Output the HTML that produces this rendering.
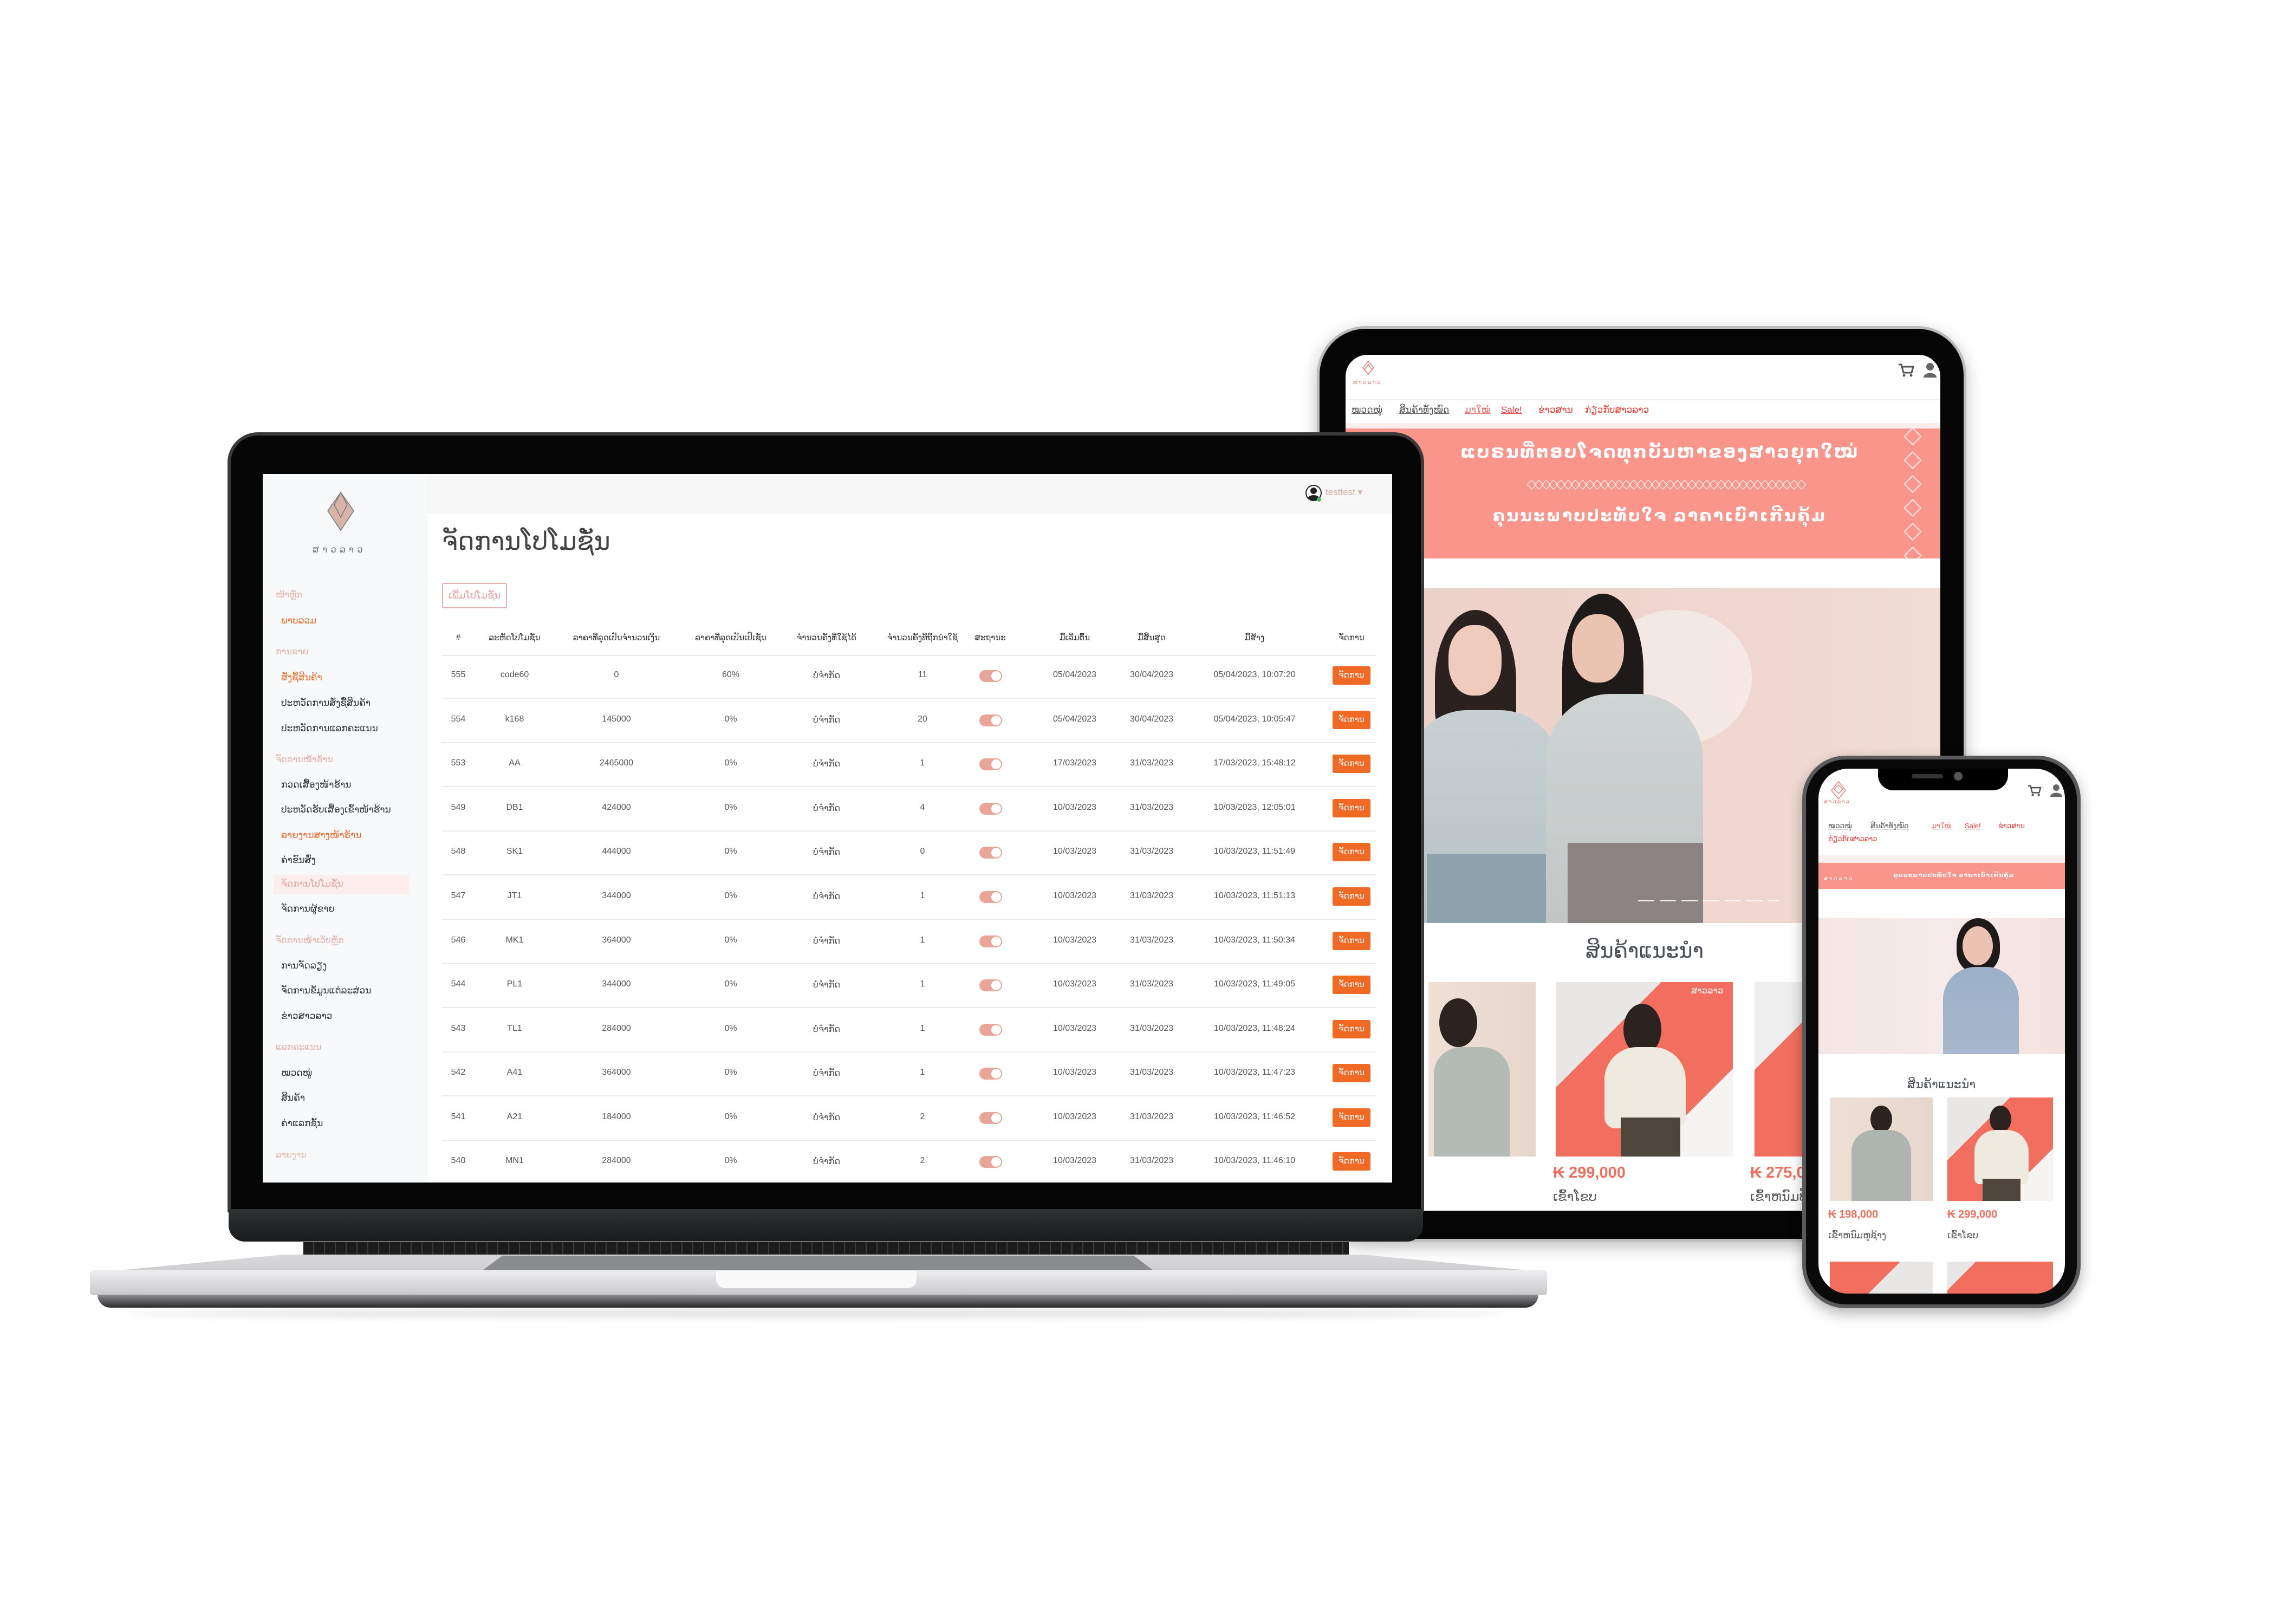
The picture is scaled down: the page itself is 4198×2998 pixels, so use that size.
<!DOCTYPE html>
<html><head><meta charset="utf-8">
<style>
*{margin:0;padding:0;box-sizing:border-box}
body{width:4198px;height:2998px;background:#fff;position:relative;overflow:hidden;font-family:"Liberation Sans","DejaVu Sans",sans-serif}
.a{position:absolute;white-space:nowrap}
.lao{font-family:"Liberation Sans","DejaVu Sans",sans-serif}
.row{position:absolute;left:0;width:2085px;height:40px;font-size:16px;color:#555;white-space:nowrap}
.row span{position:absolute;width:220px;margin-left:-110px;text-align:center;top:10px}
.hd{font-size:15px;color:#333}
.c1{left:361px}.c2{left:465px}.c3{left:653px}.c4{left:864px}.c5{left:1041px}.c6{left:1218px}.c7{left:1343px}.c8{left:1499px}.c9{left:1641px}.c10{left:1831px}.c11{left:2010px}
.tg{position:absolute;left:1323px;top:10px;width:42px;height:22px;border-radius:11px;background:#e9a597}
.tg:after{content:"";position:absolute;right:2px;top:2px;width:18px;height:18px;border-radius:50%;background:#fff}
.bt{position:absolute;left:1975px;top:3px;width:70px;height:34px;background:#f06a25;color:#fff;font-size:15px;font-weight:normal;text-align:center;line-height:34px;border-radius:3px}
.sep{position:absolute;left:331px;width:1724px;height:2px;background:#e9eaec}
.sb{position:absolute;left:34px;font-size:17px;color:#333;white-space:nowrap}
.sl{position:absolute;left:24px;font-size:16px;color:#e6b1a8;white-space:nowrap}
.nav span{position:absolute;text-decoration:underline;color:#555;white-space:nowrap}
</style></head><body>

<!-- ================= TABLET ================= -->
<div class="a" style="left:2431px;top:602px;width:1199px;height:1690px;border-radius:90px;background:#050505;border:5px solid #bcbcbc;box-shadow:0 10px 30px rgba(0,0,0,.25)"></div>
<div class="a" style="left:2484px;top:655px;width:1098px;height:1580px;background:#fff;border-radius:40px 40px 0 0;overflow:hidden">
  <svg class="a" style="left:22px;top:10px" width="40" height="36" viewBox="0 0 40 36"><path d="M20 2 L30 14 L20 26 L10 14Z M20 8 L27 17 L20 26 L13 17Z" fill="none" stroke="#ee7f77" stroke-width="1.5"/></svg>
  <div class="a" style="left:14px;top:44px;font-size:11px;color:#ee7f77;letter-spacing:2px">ສາວລາວ</div>
  <svg class="a" style="left:1020px;top:16px" width="30" height="26" viewBox="0 0 30 26"><path d="M1 2 H6 L10 17 H25 L28 6 H8" fill="none" stroke="#555" stroke-width="3"/><circle cx="11" cy="22" r="2.5" fill="#555"/><circle cx="24" cy="22" r="2.5" fill="#555"/></svg>
  <svg class="a" style="left:1066px;top:14px" width="26" height="28" viewBox="0 0 26 28"><circle cx="13" cy="8" r="7" fill="#666"/><path d="M1 28 C1 17 25 17 25 28Z" fill="#666"/></svg>
  <div class="a" style="left:0;top:82px;width:1098px;height:2px;background:#f1f1f1"></div>
  <div class="nav" style="position:absolute;left:0;top:92px;font-size:17px">
    <span style="left:11px">ໝວດໝູ່</span><span style="left:99px">ສິນຄ້າທັງໝົດ</span><span style="left:220px;color:#ee6f66">ມາໃໝ່</span><span style="left:287px;color:#ee3a33">Sale!</span><span style="left:356px;color:#ee3a33;text-decoration:none">ຂ່າວສານ</span><span style="left:442px;color:#ee3a33;text-decoration:none">ກ່ຽວກັບສາວລາວ</span>
  </div>
  <div class="a" style="left:0;top:126px;width:1098px;height:250px;background:#f9958a;overflow:hidden">
    <div class="a" style="left:0;top:0;width:1098px;height:10px;background:#fdeeee"></div>
    <div class="a" style="left:140px;top:34px;width:880px;text-align:center;color:#fff;font-size:32px;letter-spacing:3px;font-weight:bold">ແບຣນທີ່ຕອບໂຈດທຸກບັນຫາຂອງສາວຍຸກໃໝ່</div>
    <div class="a" style="left:290px;top:98px;width:600px;text-align:center;color:#fff;font-size:24px;letter-spacing:-5px;opacity:.85">◇◇◇◇◇◇◇◇◇◇◇◇◇◇◇◇◇◇◇◇◇◇◇◇◇◇◇◇◇◇◇◇◇◇◇◇◇◇</div>
    <div class="a" style="left:160px;top:154px;width:840px;text-align:center;color:#fff;font-size:30px;letter-spacing:3px;font-weight:bold">ຄຸນນະພາບປະທັບໃຈ ລາຄາເບົາເກີນຄຸ້ມ</div>
    <div class="a" style="left:1030px;top:0;width:60px;height:250px;color:#fff;font-size:44px;line-height:44px;opacity:.7;white-space:normal">◇<br>◇<br>◇<br>◇<br>◇<br>◇</div>
  </div>
  <!-- hero -->
  <div class="a" style="left:0;top:431px;width:1098px;height:618px;background:linear-gradient(90deg,#ecd0c7,#efd4cc 45%,#f1dcd6);overflow:hidden">
    <div class="a" style="left:470px;top:40px;width:280px;height:250px;border-radius:50%;background:#f7f0ee;opacity:.7"></div>
    <div class="a" style="left:840px;top:330px;width:200px;height:200px;border-radius:50%;background:#f6f1f0;opacity:.7"></div>
    <!-- left woman -->
    <div class="a" style="left:165px;top:40px;width:150px;height:260px;border-radius:50% 50% 30% 30%;background:#2b221f"></div>
    <div class="a" style="left:190px;top:68px;width:98px;height:130px;border-radius:45%;background:#f0cbbd"></div>
    <div class="a" style="left:115px;top:225px;width:280px;height:400px;border-radius:110px 110px 0 0;background:linear-gradient(#c7d0d2,#b7c2c4)"></div>
    <div class="a" style="left:150px;top:490px;width:230px;height:130px;background:#8ea3ac"></div>
    <!-- right woman -->
    <div class="a" style="left:400px;top:10px;width:150px;height:280px;border-radius:50% 50% 20% 20%;background:#1f1a1a"></div>
    <div class="a" style="left:418px;top:48px;width:96px;height:126px;border-radius:45%;background:#ebc3b3"></div>
    <div class="a" style="left:370px;top:195px;width:290px;height:425px;border-radius:120px 120px 0 0;background:linear-gradient(#cfd4d4,#c2c7c6)"></div>
    <div class="a" style="left:410px;top:470px;width:250px;height:150px;background:#8a8382"></div>
    <div class="a" style="left:540px;top:575px;width:260px;height:3px;background:repeating-linear-gradient(90deg,#fff 0 30px,transparent 30px 40px);opacity:.8"></div>
  </div>
  <div class="a" style="left:352px;top:1078px;width:400px;text-align:center;font-size:38px;color:#4a4f57">ສິນຄ້າແນະນຳ</div>
  <div class="a" style="left:153px;top:1158px;width:198px;height:322px;background:linear-gradient(90deg,#efe0d6,#e8d6cc)">
    <div class="a" style="left:20px;top:30px;width:70px;height:90px;border-radius:50%;background:#2c2320"></div>
    <div class="a" style="left:10px;top:120px;width:140px;height:202px;border-radius:50px 50px 0 0;background:#b4bab5"></div>
  </div>
  <div class="a" style="left:388px;top:1158px;width:327px;height:322px;background:linear-gradient(135deg,#e9e6e6 30%,#f26f5f 30%,#f26f5f 75%,#f6f3f3 75%)">
    <div class="a" style="left:125px;top:40px;width:70px;height:95px;border-radius:50%;background:#2c2320"></div>
    <div class="a" style="left:90px;top:120px;width:150px;height:150px;border-radius:60px 60px 20px 20px;background:#eeeae0"></div>
    <div class="a" style="left:120px;top:250px;width:110px;height:72px;background:#4e453c"></div>
    <div class="a" style="left:250px;top:6px;color:#fff;font-size:16px">ສາວລາວ</div>
  </div>
  <div class="a" style="left:755px;top:1158px;width:327px;height:322px;background:linear-gradient(135deg,#eee 25%,#f26f5f 25%)"></div>
  <div class="a" style="left:383px;top:1494px;font-size:29px;color:#f0705f;font-weight:bold">₭ 299,000</div>
  <div class="a" style="left:747px;top:1494px;font-size:29px;color:#f0705f;font-weight:bold">₭ 275,000</div>
  <div class="a" style="left:383px;top:1540px;font-size:24px;color:#555">ເຂົ້າໂຂບ</div>
  <div class="a" style="left:747px;top:1540px;font-size:24px;color:#555">ເຂົ້າຫນົມປັງ</div>
</div>

<!-- ================= LAPTOP ================= -->
<div class="a" style="left:420px;top:798px;width:2209px;height:1440px;border-radius:56px 56px 0 0;background:#060606;border:6px solid #3a3a3a;border-bottom:none"></div>
<div class="a" style="left:422px;top:2232px;width:2205px;height:60px;background:linear-gradient(#2f3032,#1a1b1d);border-radius:0 0 30px 30px"></div>
<div class="a" style="left:560px;top:2293px;width:1930px;height:25px;background:repeating-linear-gradient(90deg,#1c1c1c 0 18px,#3a3a3a 18px 20px)"></div>
<div class="a" style="left:210px;top:2316px;width:2620px;height:30px;background:linear-gradient(#d9d9db,#cfcfd1);clip-path:polygon(12% 0,88% 0,100% 100%,0 100%)"></div>
<div class="a" style="left:890px;top:2318px;width:1240px;height:28px;background:#8a8b8e;clip-path:polygon(3% 0,97% 0,100% 100%,0 100%)"></div>
<div class="a" style="left:166px;top:2345px;width:2690px;height:46px;background:linear-gradient(#eeeef0,#c9c9cc);border-radius:6px"></div>
<div class="a" style="left:1322px;top:2346px;width:370px;height:32px;background:#fafafa;border-radius:0 0 16px 16px"></div>
<div class="a" style="left:180px;top:2390px;width:2660px;height:24px;background:linear-gradient(#8f8f92,#2a2a2c);border-radius:0 0 40px 40px"></div>
<div class="a" style="left:240px;top:2418px;width:2540px;height:14px;background:rgba(0,0,0,.12);filter:blur(6px);border-radius:50%"></div>

<div class="a lao" style="left:485px;top:875px;width:2085px;height:1308px;background:#fff;overflow:hidden">
  <div class="a" style="left:0;top:0;width:2085px;height:73px;background:#f7f7f7"></div>
  <div class="a" style="left:0;top:0;width:304px;height:1308px;background:#f8f9fa"></div>
  <svg class="a" style="left:106px;top:32px" width="76" height="92" viewBox="0 0 76 92"><path d="M38 2 L62 36 L38 72 L14 36Z" fill="#d8b3aa" stroke="#777" stroke-width="1.5"/><path d="M38 2 L50 25 L38 48 L26 25Z" fill="none" stroke="#777" stroke-width="1.5"/></svg>
  <div class="a" style="left:92px;top:130px;font-size:17px;color:#777;letter-spacing:6px">ສາວລາວ</div>

  <div class="sl" style="top:213px">ໜ້າຫຼັກ</div>
  <div class="sb" style="top:261px;color:#ef6a2a">ພາບລວມ</div>
  <div class="sl" style="top:318px">ການຂາຍ</div>
  <div class="sb" style="top:366px;color:#ef6a2a">ສັ່ງຊື້ສິນຄ້າ</div>
  <div class="sb" style="top:413px">ປະຫວັດການສັ່ງຊື້ສິນຄ້າ</div>
  <div class="sb" style="top:460px">ປະຫວັດການແລກຄະແນນ</div>
  <div class="sl" style="top:517px">ຈັດການໜ້າຮ້ານ</div>
  <div class="sb" style="top:564px">ກວດເສື້ອງໜ້າຮ້ານ</div>
  <div class="sb" style="top:610px">ປະຫວັດຮັບເສື້ອງເຂົ້າໜ້າຮ້ານ</div>
  <div class="sb" style="top:657px;color:#ef6a2a">ລາຍງານສາງໜ້າຮ້ານ</div>
  <div class="sb" style="top:703px">ຄ່າຂົນສົ່ງ</div>
  <div class="a" style="left:20px;top:740px;width:250px;height:36px;background:#fbeeec"></div>
  <div class="sb" style="top:747px;color:#e6a99f">ຈັດການໂປໂມຊັ່ນ</div>
  <div class="sb" style="top:793px">ຈັດການຜູ້ຂາຍ</div>
  <div class="sl" style="top:851px">ຈັດການໜ້າເວັບຫຼັກ</div>
  <div class="sb" style="top:898px">ການຈັດລຽງ</div>
  <div class="sb" style="top:944px">ຈັດການຂໍ້ມູນແຕ່ລະສ່ວນ</div>
  <div class="sb" style="top:991px">ຂ່າວສາວລາວ</div>
  <div class="sl" style="top:1048px">ແລກຄະແນນ</div>
  <div class="sb" style="top:1096px">ໝວດໝູ່</div>
  <div class="sb" style="top:1142px">ສິນຄ້າ</div>
  <div class="sb" style="top:1189px">ຄ່າແລກຊັ້ນ</div>
  <div class="sl" style="top:1247px">ລາຍງານ</div>

  <svg class="a" style="left:1925px;top:20px" width="30" height="32" viewBox="0 0 30 32"><circle cx="15" cy="15" r="14" fill="#fff" stroke="#222" stroke-width="2"/><circle cx="15" cy="11" r="6" fill="#222"/><path d="M4 25 C6 17 24 17 26 25 C22 30 8 30 4 25Z" fill="#222"/><circle cx="25" cy="27" r="4" fill="#3cc060"/></svg>
  <div class="a" style="left:1962px;top:24px;font-size:17px;color:#d8aaa2">testtest ▾</div>

  <div class="a" style="left:331px;top:97px;font-size:46px;color:#444">ຈັດການໂປໂມຊັ່ນ</div>
  <div class="a" style="left:331px;top:201px;width:120px;height:47px;border:2px solid #e8b0aa;border-radius:3px;color:#e5a69d;font-size:18px;text-align:center;line-height:43px">ເພີ່ມໂປໂມຊັ່ນ</div>

  <div class="row hd" style="top:283px"><span class="c1">#</span><span class="c2">ລະຫັດໂປໂມຊັ່ນ</span><span class="c3">ລາຄາທີ່ລຸດເປັນຈຳນວນເງິນ</span><span class="c4">ລາຄາທີ່ລຸດເປັນເປີເຊັນ</span><span class="c5">ຈຳນວນຄັ້ງທີ່ໃຊ້ໄດ້</span><span class="c6">ຈຳນວນຄັ້ງທີ່ຖືກນຳໃຊ້</span><span class="c7">ສະຖານະ</span><span class="c8">ມື້ເລີ່ມຕົ້ນ</span><span class="c9">ມື້ສິ້ນສຸດ</span><span class="c10">ມື້ສ້າງ</span><span class="c11">ຈັດການ</span></div>
  <div class="sep" style="top:334px"></div>

  <div class="row" style="top:352px"><span class="c1">555</span><span class="c2">code60</span><span class="c3">0</span><span class="c4">60%</span><span class="c5">ບໍ່ຈຳກັດ</span><span class="c6">11</span><i class="tg"></i><span class="c8">05/04/2023</span><span class="c9">30/04/2023</span><span class="c10">05/04/2023, 10:07:20</span><b class="bt">ຈັດການ</b></div>
  <div class="sep" style="top:413px"></div>
  <div class="row" style="top:434px"><span class="c1">554</span><span class="c2">k168</span><span class="c3">145000</span><span class="c4">0%</span><span class="c5">ບໍ່ຈຳກັດ</span><span class="c6">20</span><i class="tg"></i><span class="c8">05/04/2023</span><span class="c9">30/04/2023</span><span class="c10">05/04/2023, 10:05:47</span><b class="bt">ຈັດການ</b></div>
  <div class="sep" style="top:495px"></div>
  <div class="row" style="top:515px"><span class="c1">553</span><span class="c2">AA</span><span class="c3">2465000</span><span class="c4">0%</span><span class="c5">ບໍ່ຈຳກັດ</span><span class="c6">1</span><i class="tg"></i><span class="c8">17/03/2023</span><span class="c9">31/03/2023</span><span class="c10">17/03/2023, 15:48:12</span><b class="bt">ຈັດການ</b></div>
  <div class="sep" style="top:576px"></div>
  <div class="row" style="top:597px"><span class="c1">549</span><span class="c2">DB1</span><span class="c3">424000</span><span class="c4">0%</span><span class="c5">ບໍ່ຈຳກັດ</span><span class="c6">4</span><i class="tg"></i><span class="c8">10/03/2023</span><span class="c9">31/03/2023</span><span class="c10">10/03/2023, 12:05:01</span><b class="bt">ຈັດການ</b></div>
  <div class="sep" style="top:658px"></div>
  <div class="row" style="top:678px"><span class="c1">548</span><span class="c2">SK1</span><span class="c3">444000</span><span class="c4">0%</span><span class="c5">ບໍ່ຈຳກັດ</span><span class="c6">0</span><i class="tg"></i><span class="c8">10/03/2023</span><span class="c9">31/03/2023</span><span class="c10">10/03/2023, 11:51:49</span><b class="bt">ຈັດການ</b></div>
  <div class="sep" style="top:739px"></div>
  <div class="row" style="top:760px"><span class="c1">547</span><span class="c2">JT1</span><span class="c3">344000</span><span class="c4">0%</span><span class="c5">ບໍ່ຈຳກັດ</span><span class="c6">1</span><i class="tg"></i><span class="c8">10/03/2023</span><span class="c9">31/03/2023</span><span class="c10">10/03/2023, 11:51:13</span><b class="bt">ຈັດການ</b></div>
  <div class="sep" style="top:821px"></div>
  <div class="row" style="top:842px"><span class="c1">546</span><span class="c2">MK1</span><span class="c3">364000</span><span class="c4">0%</span><span class="c5">ບໍ່ຈຳກັດ</span><span class="c6">1</span><i class="tg"></i><span class="c8">10/03/2023</span><span class="c9">31/03/2023</span><span class="c10">10/03/2023, 11:50:34</span><b class="bt">ຈັດການ</b></div>
  <div class="sep" style="top:903px"></div>
  <div class="row" style="top:923px"><span class="c1">544</span><span class="c2">PL1</span><span class="c3">344000</span><span class="c4">0%</span><span class="c5">ບໍ່ຈຳກັດ</span><span class="c6">1</span><i class="tg"></i><span class="c8">10/03/2023</span><span class="c9">31/03/2023</span><span class="c10">10/03/2023, 11:49:05</span><b class="bt">ຈັດການ</b></div>
  <div class="sep" style="top:984px"></div>
  <div class="row" style="top:1005px"><span class="c1">543</span><span class="c2">TL1</span><span class="c3">284000</span><span class="c4">0%</span><span class="c5">ບໍ່ຈຳກັດ</span><span class="c6">1</span><i class="tg"></i><span class="c8">10/03/2023</span><span class="c9">31/03/2023</span><span class="c10">10/03/2023, 11:48:24</span><b class="bt">ຈັດການ</b></div>
  <div class="sep" style="top:1066px"></div>
  <div class="row" style="top:1086px"><span class="c1">542</span><span class="c2">A41</span><span class="c3">364000</span><span class="c4">0%</span><span class="c5">ບໍ່ຈຳກັດ</span><span class="c6">1</span><i class="tg"></i><span class="c8">10/03/2023</span><span class="c9">31/03/2023</span><span class="c10">10/03/2023, 11:47:23</span><b class="bt">ຈັດການ</b></div>
  <div class="sep" style="top:1147px"></div>
  <div class="row" style="top:1168px"><span class="c1">541</span><span class="c2">A21</span><span class="c3">184000</span><span class="c4">0%</span><span class="c5">ບໍ່ຈຳກັດ</span><span class="c6">2</span><i class="tg"></i><span class="c8">10/03/2023</span><span class="c9">31/03/2023</span><span class="c10">10/03/2023, 11:46:52</span><b class="bt">ຈັດການ</b></div>
  <div class="sep" style="top:1229px"></div>
  <div class="row" style="top:1249px"><span class="c1">540</span><span class="c2">MN1</span><span class="c3">284000</span><span class="c4">0%</span><span class="c5">ບໍ່ຈຳກັດ</span><span class="c6">2</span><i class="tg"></i><span class="c8">10/03/2023</span><span class="c9">31/03/2023</span><span class="c10">10/03/2023, 11:46:10</span><b class="bt">ຈັດການ</b></div>
</div>

<!-- ================= PHONE ================= -->
<div class="a" style="left:3327px;top:1395px;width:514px;height:1020px;border-radius:80px;background:#0a0a0a;border:7px solid #5a5a5c;box-shadow:0 10px 25px rgba(0,0,0,.3)"></div>
<div class="a" style="left:3357px;top:1419px;width:455px;height:969px;border-radius:55px;background:#fff;overflow:hidden">
  <div class="a" style="left:110px;top:0;width:240px;height:40px;background:#000;border-radius:0 0 28px 28px"></div>
  <div class="a" style="left:172px;top:10px;width:58px;height:8px;border-radius:4px;background:#333"></div>
  <div class="a" style="left:250px;top:6px;width:16px;height:16px;border-radius:50%;background:#555"></div>
  <svg class="a" style="left:20px;top:22px" width="34" height="40" viewBox="0 0 34 40"><path d="M17 2 L30 18 L17 34 L4 18Z M17 8 L25 16 L17 24 L9 16Z" fill="none" stroke="#ee7f77" stroke-width="1.5"/></svg>
  <div class="a" style="left:10px;top:56px;font-size:10px;color:#ee7f77;letter-spacing:2px">ສາວລາວ</div>
  <svg class="a" style="left:386px;top:30px" width="26" height="22" viewBox="0 0 30 26"><path d="M1 2 H6 L10 17 H25 L28 6 H8" fill="none" stroke="#555" stroke-width="3"/><circle cx="11" cy="22" r="2.5" fill="#555"/><circle cx="24" cy="22" r="2.5" fill="#555"/></svg>
  <svg class="a" style="left:428px;top:28px" width="22" height="24" viewBox="0 0 22 24"><circle cx="11" cy="7" r="6" fill="#666"/><path d="M0 24 C0 14 22 14 22 24Z" fill="#666"/></svg>
  <div class="nav" style="position:absolute;left:0;top:98px;font-size:13px">
    <span style="left:18px">ໝວດໝູ່</span><span style="left:96px">ສິນຄ້າທັງໝົດ</span><span style="left:209px;color:#ee6f66">ມາໃໝ່</span><span style="left:270px;color:#ee3a33">Sale!</span><span style="left:332px;color:#ee3a33;text-decoration:none">ຂ່າວສານ</span>
    <span style="left:18px;top:24px;color:#ee3a33;text-decoration:none">ກ່ຽວກັບສາວລາວ</span>
  </div>
  <div class="a" style="left:0;top:160px;width:455px;height:14px;background:#fdeeee"></div>
  <div class="a" style="left:0;top:174px;width:455px;height:48px;background:#f9958a">
    <div class="a" style="left:10px;top:24px;font-size:10px;color:#fff;letter-spacing:3px">ສາວລາວ</div>
    <div class="a" style="left:100px;top:16px;width:300px;text-align:center;color:#fff;font-size:11px;font-weight:bold;letter-spacing:1px">ຄຸນນະພາບປະທັບໃຈ ລາຄາເບົາເກີນຄຸ້ມ</div>
  </div>
  <div class="a" style="left:0;top:276px;width:455px;height:251px;background:linear-gradient(90deg,#f3e6e4,#f6ebea 50%,#f2e2df);overflow:hidden">
    <div class="a" style="left:255px;top:0;width:80px;height:100px;border-radius:50% 50% 40% 40%;background:#1e1a1a"></div>
    <div class="a" style="left:266px;top:15px;width:56px;height:72px;border-radius:50%;background:#ecc3b2"></div>
    <div class="a" style="left:230px;top:90px;width:140px;height:170px;border-radius:60px 60px 0 0;background:linear-gradient(#9bb0c8,#a8b8cc)"></div>
  </div>
  <div class="a" style="left:77px;top:570px;width:300px;text-align:center;font-size:22px;color:#4a4f57">ສິນຄ້າແນະນຳ</div>
  <div class="a" style="left:21px;top:607px;width:190px;height:191px;background:linear-gradient(90deg,#efe0d6,#e6d6cc)">
    <div class="a" style="left:75px;top:15px;width:40px;height:50px;border-radius:50%;background:#2c2320"></div>
    <div class="a" style="left:40px;top:60px;width:110px;height:131px;border-radius:40px 40px 0 0;background:#aeb5b0"></div>
  </div>
  <div class="a" style="left:238px;top:607px;width:195px;height:191px;background:linear-gradient(135deg,#e9e6e6 30%,#f26f5f 30%,#f26f5f 75%,#f6f3f3 75%)">
    <div class="a" style="left:78px;top:15px;width:40px;height:50px;border-radius:50%;background:#2c2320"></div>
    <div class="a" style="left:50px;top:60px;width:100px;height:100px;border-radius:40px 40px 10px 10px;background:#eeeae0"></div>
    <div class="a" style="left:65px;top:150px;width:70px;height:41px;background:#4e453c"></div>
  </div>
  <div class="a" style="left:18px;top:812px;font-size:20px;color:#f0705f;font-weight:bold">₭ 198,000</div>
  <div class="a" style="left:238px;top:812px;font-size:20px;color:#f0705f;font-weight:bold">₭ 299,000</div>
  <div class="a" style="left:18px;top:852px;font-size:17px;color:#555">ເຂົ້າຫນົມຫູຊ້າງ</div>
  <div class="a" style="left:238px;top:852px;font-size:17px;color:#555">ເຂົ້າໂຂບ</div>
  <div class="a" style="left:21px;top:910px;width:190px;height:70px;background:linear-gradient(135deg,#f26f5f 50%,#e9e6e6 50%)"></div>
  <div class="a" style="left:238px;top:910px;width:195px;height:70px;background:linear-gradient(135deg,#e9e6e6 20%,#f26f5f 20%)"></div>
</div>

</body></html>
